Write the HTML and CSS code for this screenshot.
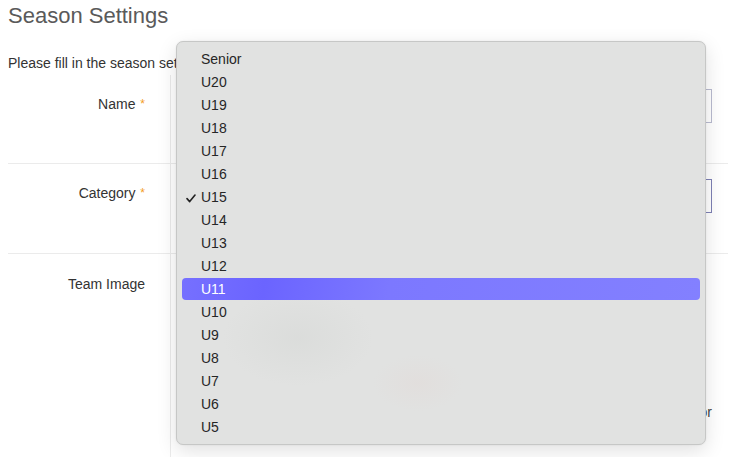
FILE: index.html
```html
<!DOCTYPE html>
<html>
<head>
<meta charset="utf-8">
<link rel="stylesheet" href="styles.css">
</head>
<body>
<h2 class="title">Season Settings</h2>
<p class="intro">Please fill in the season settings below.</p>
<div class="form">
  <div class="row">
    <div class="label">Name <span class="req">*</span></div>
    <div class="field"><input class="input" type="text"></div>
  </div>
  <div class="row">
    <div class="label">Category <span class="req">*</span></div>
    <div class="field"><div class="input focus"></div></div>
  </div>
  <div class="row last">
    <div class="label">Team Image</div>
    <div class="field upload">
      <div class="drop">Drag an image here or</div>
    </div>
  </div>
</div>

<div class="menu">
  <div class="item">Senior</div>
  <div class="item">U20</div>
  <div class="item">U19</div>
  <div class="item">U18</div>
  <div class="item">U17</div>
  <div class="item">U16</div>
  <div class="item checked"><svg class="check" width="10" height="9" viewBox="0 0 10 9"><polyline points="1,4.6 3.7,7.6 9,1" fill="none" stroke="#222" stroke-width="1.6" stroke-linecap="round" stroke-linejoin="round"/></svg>U15</div>
  <div class="item">U14</div>
  <div class="item">U13</div>
  <div class="item">U12</div>
  <div class="item active">U11</div>
  <div class="item">U10</div>
  <div class="item">U9</div>
  <div class="item">U8</div>
  <div class="item">U7</div>
  <div class="item">U6</div>
  <div class="item">U5</div>
</div>
</body>
</html>
```

FILE: styles.css
```css
html, body {
  margin: 0;
  padding: 0;
  background: #fff;
}
body {
  padding: 0 3px 0 8px;
  font-family: "Liberation Sans", Arial, Helvetica, sans-serif;
  color: #333;
  font-size: 14px;
  overflow: hidden;
  height: 457px;
}
.title {
  margin: 0;
  padding-top: 3px;
  font-size: 22px;
  font-weight: normal;
  color: #5a5a5a;
  line-height: 26px;
}
.intro {
  margin: 0;
  padding-top: 26px;
  line-height: 16px;
  font-size: 14px;
  color: #333;
}
.form {
  margin-top: 4px;
}
.row {
  display: flex;
  border-bottom: 1px solid #ebebeb;
  height: 88px;
}
.row + .row {
  height: 89px;
}
.row.last {
  border-bottom: none;
  height: 210px;
}
.label {
  width: 137px;
  padding-right: 25px;
  text-align: right;
  padding-top: 21px;
  line-height: 16px;
  color: #333;
}
.row.last .label {
  padding-top: 22px;
}
.req {
  color: #f39c25;
  font-size: 12px;
  vertical-align: top;
  margin-left: 1px;
}
.field {
  flex: 1;
  border-left: 1px solid #ebebeb;
  padding: 14px 16px 0 15px;
}
.row + .row .field {
  padding-top: 15px;
}
.input {
  display: block;
  box-sizing: border-box;
  width: 100%;
  height: 34px;
  border: 1px solid #b9bbd0;
  background: #fff;
  margin: 0;
  padding: 0;
  outline: none;
}
.input.focus {
  border-color: #7e81b5;
}
.drop {
  text-align: right;
  margin-top: 135px;
  line-height: 16px;
  font-size: 14px;
  color: #444;
}
.menu {
  position: absolute;
  left: 176px;
  top: 41px;
  width: 528px;
  padding: 6px 0 5px;
  border: 1px solid #c6c7c6;
  border-radius: 7px;
  background-color: #e1e2e1;
  background-image:
    radial-gradient(ellipse 75px 48px at 121px 296px, rgba(214,216,214,0.55), rgba(214,216,214,0)),
    radial-gradient(ellipse 45px 28px at 241px 341px, rgba(226,219,217,0.55), rgba(226,219,217,0));
  box-shadow: 0 6px 20px rgba(0,0,0,0.12), 0 0 2px rgba(0,0,0,0.08);
}
.item {
  position: relative;
  height: 23px;
  line-height: 23px;
  padding-left: 24px;
  font-size: 14px;
  color: #262626;
}
.item.active {
  margin: 0 5px 1px;
  padding-left: 19px;
  height: 22px;
  line-height: 22px;
  border-radius: 4px;
  color: #fff;
  background: linear-gradient(100deg, #7670ff 0%, #6b64ff 16%, #7c78ff 40%, #8380ff 100%);
}
.check {
  position: absolute;
  left: 9px;
  top: 8px;
}
```
